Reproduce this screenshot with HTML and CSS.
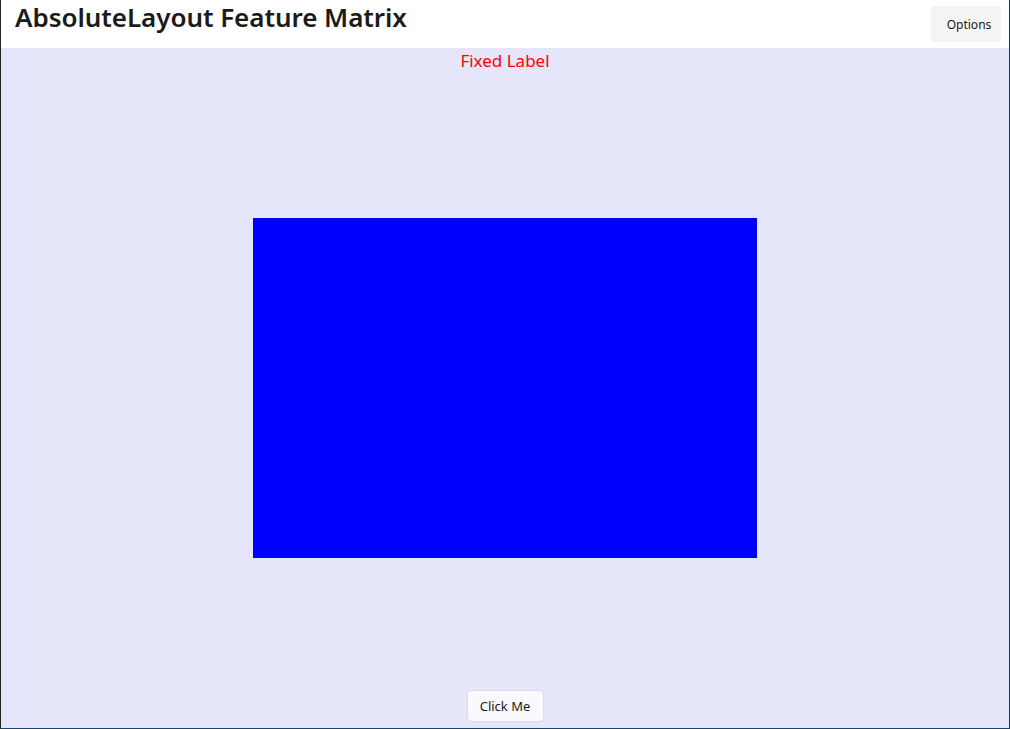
FILE: index.html
```html
<!DOCTYPE html>
<html>
<head>
<meta charset="utf-8">
<link rel="stylesheet" href="styles.css">
</head>
<body>
<div class="window">
  <header class="titlebar">
    <h1 class="title">AbsoluteLayout Feature Matrix</h1>
    <button class="options">Options</button>
  </header>
  <main class="canvas">
    <div class="fixed-label">Fixed Label</div>
    <div class="box"></div>
    <button class="click-btn">Click Me</button>
  </main>
</div>
</body>
</html>
```
FILE: styles.css
```css
html, body {
  margin: 0;
  padding: 0;
  height: 100%;
}
body {
  font-family: "Noto Sans", "Open Sans", sans-serif;
  background: #e6e6fa;
}
.window {
  box-sizing: border-box;
  width: 1010px;
  height: 729px;
  display: flex;
  flex-direction: column;
  border-left: 1px solid #262626;
  border-right: 1px solid #1d3b5e;
  border-bottom: 1px solid #1d4466;
  border-image: none;
}
.window::before {
  content: none;
}
.titlebar {
  height: 48px;
  flex: 0 0 48px;
  background: #ffffff;
  display: flex;
  align-items: flex-start;
  justify-content: space-between;
}
.title {
  margin: 0;
  padding: 0 0 0 14px;
  font-size: 26px;
  font-weight: 600;
  line-height: 34px;
  color: #1b1b1b;
  letter-spacing: -0.05px;
}
.options {
  margin: 6px 8px 0 0;
  width: 70px;
  height: 36px;
  border: none;
  border-radius: 4px;
  background: #f4f4f4;
  font-family: "Noto Sans", "Open Sans", sans-serif;
  font-size: 12px;
  color: #1b1b1b;
  padding: 0 0 0 6px;
}
.canvas {
  flex: 1;
  background: #e6e6fa;
  display: grid;
  grid-template-areas: "cell";
  box-shadow: inset 1px 0 0 -0px transparent;
}
.canvas > * {
  grid-area: cell;
  justify-self: center;
}
.fixed-label {
  align-self: start;
  margin-top: 1px;
  color: #ff0000;
  font-size: 17px;
  line-height: 24px;
}
.box {
  align-self: center;
  width: 504px;
  height: 340px;
  background: #0000ff;
}
.click-btn {
  align-self: end;
  margin-bottom: 6px;
  width: 77px;
  height: 32px;
  box-sizing: border-box;
  border: 1px solid #dcdce6;
  border-radius: 4px;
  background: #f9f9fe;
  font-family: "Noto Sans", "Open Sans", sans-serif;
  font-size: 13px;
  color: #1b1b1b;
  padding: 0;
}
```
